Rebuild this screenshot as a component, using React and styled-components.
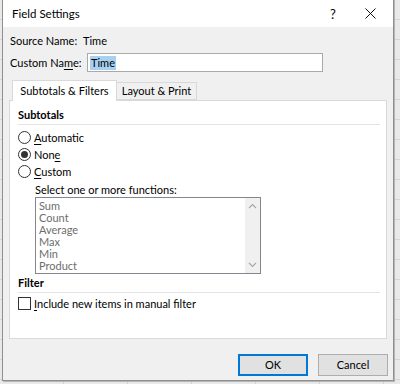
import React from 'react'
import styled, { createGlobalStyle } from 'styled-components'

const GlobalStyle = createGlobalStyle`
  html, body { margin: 0; padding: 0; }
  body {
    width: 400px;
    height: 384px;
    overflow: hidden;
    font-family: Lato, "Noto Sans", sans-serif;
    font-size: 11px;
    line-height: 14px;
    color: #000;
  }
`

const Sheet = styled.div`
  width: 400px;
  height: 384px;
  overflow: hidden;
  background-color: #e9e9e9;
  background-image:
    repeating-linear-gradient(to bottom, transparent 0 19px, #d4d4d4 19px 20px),
    repeating-linear-gradient(to right, transparent 0 63px, #d4d4d4 63px 64px);
`

const Dialog = styled.div`
  box-sizing: border-box;
  width: 392px;
  height: 382px;
  margin: -1px 0 0 2px;
  border: 1px solid #8f8f8f;
  background: #f0f0f0;
  display: flex;
  flex-direction: column;
  box-shadow: 1px 1px 0 #b5b5b5;
`

const TitleBar = styled.div`
  height: 27px;
  flex-shrink: 0;
  background: #fff;
  display: flex;
  align-items: center;
  padding-left: 9px;
  font-size: 11.5px;
`

const Title = styled.div`
  flex: 1;
`

const TitleButton = styled.div`
  width: ${p => p.$w}px;
  display: flex;
  justify-content: center;
  align-items: center;
  font-size: 13px;
`

const Body = styled.div`
  flex: 1;
  padding: 0 5px 0 6px;
  display: flex;
  flex-direction: column;
`

const FieldRow = styled.div`
  display: flex;
  align-items: center;
  height: ${p => p.$h}px;
  margin-top: ${p => p.$mt}px;
  padding-left: 1px;
`

const Label = styled.span`
  width: ${p => p.$w}px;
  white-space: nowrap;
`

const Key = styled.span`
  text-decoration: underline;
  text-underline-offset: 2px;
`

const NameInput = styled.div`
  box-sizing: border-box;
  width: 236px;
  height: 19px;
  border: 1px solid #a9a9a9;
  background: #fff;
  display: flex;
  align-items: center;
  padding-left: 2px;
`

const Selected = styled.span`
  background: #a8d0f2;
  padding: 0 1px;
  line-height: 14px;
`

const TabStrip = styled.div`
  display: flex;
  align-items: flex-end;
  height: 21px;
  margin-top: 7px;
  padding-left: 3px;
  position: relative;
  z-index: 1;
`

const Tab = styled.div`
  box-sizing: border-box;
  width: ${p => p.$w}px;
  height: ${p => (p.$active ? 21 : 18)}px;
  margin-bottom: ${p => (p.$active ? -1 : 0)}px;
  background: ${p => (p.$active ? '#fff' : '#f0f0f0')};
  border: 1px solid #d9d9d9;
  border-bottom: ${p => (p.$active ? 'none' : '1px solid #d9d9d9')};
  border-left: ${p => (p.$first ? '1px solid #d9d9d9' : 'none')};
  display: flex;
  align-items: center;
  justify-content: center;
  white-space: nowrap;
  padding-bottom: ${p => (p.$active ? 1 : 0)}px;
`

const Panel = styled.div`
  box-sizing: border-box;
  width: 378px;
  height: 239px;
  flex-shrink: 0;
  background: #fff;
  border: 1px solid #d9d9d9;
  padding: 0 6px 0 8px;
  display: flex;
  flex-direction: column;
`

const GroupHead = styled.div`
  font-weight: 700;
  height: 14px;
  display: flex;
  align-items: center;
  margin-top: ${p => p.$mt}px;
  border-bottom: 1px solid #e3e3e3;
  padding-bottom: 2px;
`

const OptionRow = styled.div`
  display: flex;
  align-items: center;
  gap: 3px;
  height: 17px;
  margin-top: ${p => p.$mt || 0}px;
`

const Radio = styled.span`
  box-sizing: border-box;
  width: 13px;
  height: 13px;
  border-radius: 50%;
  border: 1px solid #333;
  background: #fff;
  display: flex;
  align-items: center;
  justify-content: center;
  &::after {
    content: '';
    width: 7px;
    height: 7px;
    border-radius: 50%;
    background: ${p => (p.$on ? '#333' : 'transparent')};
  }
`

const Check = styled.span`
  box-sizing: border-box;
  width: 13px;
  height: 13px;
  border: 1px solid #333;
  background: #fff;
`

const Hint = styled.div`
  margin: 3px 0 0 17px;
  height: 13px;
  display: flex;
  align-items: center;
`

const ListBox = styled.div`
  box-sizing: border-box;
  width: 226px;
  height: 77px;
  margin: 1px 0 0 17px;
  border: 1px solid #82878f;
  display: flex;
`

const ListItems = styled.div`
  flex: 1;
  padding: 2px 0 0 3px;
  color: #6d6d6d;
  line-height: 12px;
  overflow: hidden;
`

const ScrollBar = styled.div`
  width: 15px;
  background: #f0f0f0;
  display: flex;
  flex-direction: column;
  justify-content: space-between;
  align-items: center;
  padding: 5px 0;
`

const Footer = styled.div`
  display: flex;
  justify-content: flex-end;
  gap: 10px;
  margin-top: 15px;
`

const Button = styled.div`
  box-sizing: border-box;
  width: 70px;
  height: 22px;
  background: #e1e1e1;
  border: ${p => (p.$default ? '2px solid #0078d7' : '1px solid #adadad')};
  display: flex;
  align-items: center;
  justify-content: center;
`

const Chevron = ({ up }) => (
  <svg width="9" height="6" viewBox="0 0 9 6">
    <path
      d={up ? 'M1 5 L4.5 1.5 L8 5' : 'M1 1 L4.5 4.5 L8 1'}
      fill="none"
      stroke="#a6a6a6"
      strokeWidth="1.1"
    />
  </svg>
)

const functions = ['Sum', 'Count', 'Average', 'Max', 'Min', 'Product']

export default function App() {
  return (
    <Sheet>
      <GlobalStyle />
      <Dialog>
        <TitleBar>
          <Title>Field Settings</Title>
          <TitleButton $w={28}>?</TitleButton>
          <TitleButton $w={46}>
            <svg width="11" height="11" viewBox="0 0 11 11">
              <path d="M0.5 0.5 L10.5 10.5 M10.5 0.5 L0.5 10.5" stroke="#111" strokeWidth="1" />
            </svg>
          </TitleButton>
        </TitleBar>
        <Body>
          <FieldRow $h={18} $mt={5}>
            <Label $w={73}>Source Name:</Label>
            <span>Time</span>
          </FieldRow>
          <FieldRow $h={19} $mt={3}>
            <Label $w={77}>Custom Na<Key>m</Key>e:</Label>
            <NameInput><Selected>Time</Selected></NameInput>
          </FieldRow>
          <TabStrip>
            <Tab $w={105} $active $first>Subtotals &amp; Filters</Tab>
            <Tab $w={80}>Layout &amp; Print</Tab>
          </TabStrip>
          <Panel>
            <GroupHead $mt={7}>Subtotals</GroupHead>
            <OptionRow $mt={4}><Radio /><span><Key>A</Key>utomatic</span></OptionRow>
            <OptionRow><Radio $on /><span>Non<Key>e</Key></span></OptionRow>
            <OptionRow><Radio /><span><Key>C</Key>ustom</span></OptionRow>
            <Hint>Select one or more functions:</Hint>
            <ListBox>
              <ListItems>
                {functions.map(f => <div key={f}>{f}</div>)}
              </ListItems>
              <ScrollBar>
                <Chevron up />
                <Chevron />
              </ScrollBar>
            </ListBox>
            <GroupHead $mt={2}>Filter</GroupHead>
            <OptionRow $mt={2}><Check /><span><Key>I</Key>nclude new items in manual filter</span></OptionRow>
          </Panel>
          <Footer>
            <Button $default>OK</Button>
            <Button>Cancel</Button>
          </Footer>
        </Body>
      </Dialog>
    </Sheet>
  )
}
